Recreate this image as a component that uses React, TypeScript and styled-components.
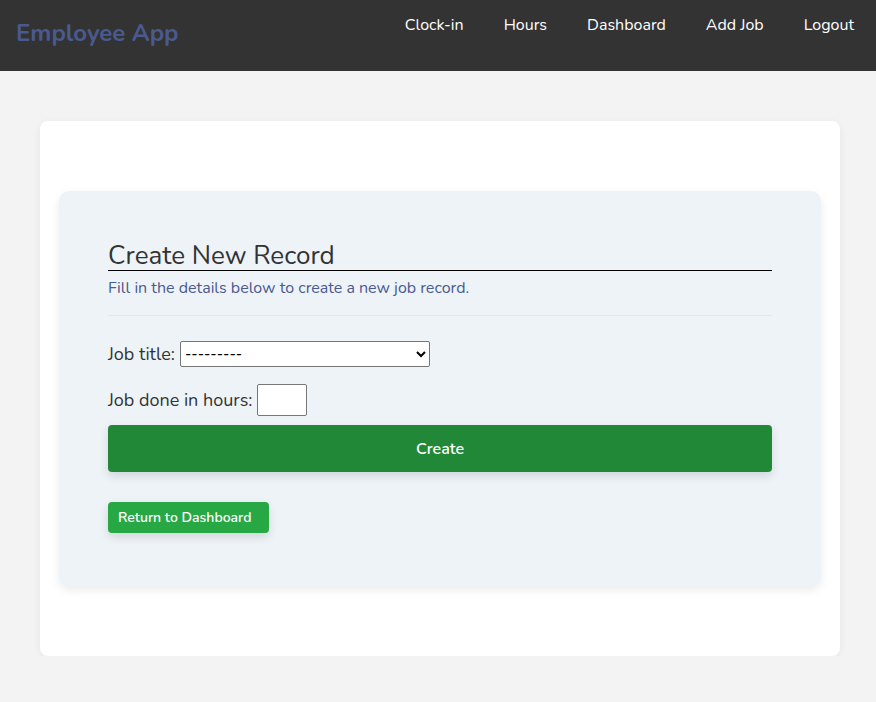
import React from "react";
import styled, { createGlobalStyle } from "styled-components";

const Global = createGlobalStyle`
  html, body { margin: 0; padding: 0; }
  body {
    background: #f3f3f3;
    font-family: "Nunito", "Lato", "Open Sans", sans-serif;
    color: #333;
  }
`;

const NavBar = styled.nav`
  height: 71px;
  background: #333333;
  display: flex;
  justify-content: space-between;
  align-items: flex-start;
  padding: 0 22px 0 16px;
  box-sizing: border-box;
`;

const Brand = styled.div`
  color: #4a5a8f;
  font-size: 24px;
  font-weight: 700;
  margin-top: 18px;
  line-height: 30px;
`;

const Links = styled.div`
  display: flex;
  gap: 40px;
  margin-top: 14px;
`;

const NavLink = styled.a`
  color: #fff;
  font-size: 16px;
  line-height: 22px;
  text-decoration: none;
`;

const Card = styled.div`
  margin: 50px 36px 0 40px;
  background: #fff;
  border-radius: 8px;
  box-shadow: 0 2px 8px rgba(0, 0, 0, 0.06);
  padding: 70px 19px;
`;

const Panel = styled.div`
  background: #eef3f8;
  border-radius: 10px;
  box-shadow: 0 4px 10px rgba(0, 0, 0, 0.08);
  padding: 50px 49px 53px;
  display: flex;
  flex-direction: column;
`;

const Title = styled.h2`
  margin: 0;
  font-size: 26px;
  font-weight: 400;
  line-height: 29px;
  color: #333;
  border-bottom: 1px solid #000;
`;

const Subtitle = styled.p`
  margin: 7px 0 0;
  font-size: 16px;
  line-height: 20px;
  color: #4a5a8f;
`;

const Rule = styled.hr`
  margin: 17px 0 0;
  border: none;
  border-top: 1px solid #e3e8ee;
`;

const Field = styled.div<{ $top: number }>`
  display: flex;
  align-items: center;
  gap: 5px;
  margin-top: ${(p) => p.$top}px;
  font-size: 18px;
`;

const Select = styled.select`
  width: 250px;
  height: 26px;
  font-size: 15px;
  border: 1px solid #767676;
  border-radius: 2px;
  background: #fff;
  color: #000;
  font-family: inherit;
`;

const NumberInput = styled.input`
  width: 50px;
  height: 32px;
  box-sizing: border-box;
  border: 1px solid #767676;
  border-radius: 2px;
  background: #fff;
`;

const Button = styled.button<{ $variant: "primary" | "small" }>`
  border: none;
  color: #fff;
  font-family: inherit;
  font-weight: 600;
  border-radius: 4px;
  cursor: pointer;
  box-shadow: 0 4px 10px rgba(0, 0, 0, 0.12);
  ${(p) =>
    p.$variant === "primary"
      ? `
    background: #218838;
    height: 47px;
    width: 100%;
    font-size: 16px;
    margin-top: 9px;
  `
      : `
    background: #28a745;
    height: 31px;
    align-self: flex-start;
    padding: 0 18px 0 10px;
    font-size: 14px;
    margin-top: 30px;
  `}
`;

export default function App() {
  return (
    <>
      <Global />
      <NavBar>
        <Brand>Employee App</Brand>
        <Links>
          <NavLink href="#">Clock-in</NavLink>
          <NavLink href="#">Hours</NavLink>
          <NavLink href="#">Dashboard</NavLink>
          <NavLink href="#">Add Job</NavLink>
          <NavLink href="#">Logout</NavLink>
        </Links>
      </NavBar>
      <Card>
        <Panel>
          <Title>Create New Record</Title>
          <Subtitle>Fill in the details below to create a new job record.</Subtitle>
          <Rule />
          <Field $top={25}>
            <label>Job title:</label>
            <Select defaultValue="">
              <option value="">---------</option>
            </Select>
          </Field>
          <Field $top={17}>
            <label>Job done in hours:</label>
            <NumberInput type="text" />
          </Field>
          <Button $variant="primary">Create</Button>
          <Button $variant="small">Return to Dashboard</Button>
        </Panel>
      </Card>
    </>
  );
}
